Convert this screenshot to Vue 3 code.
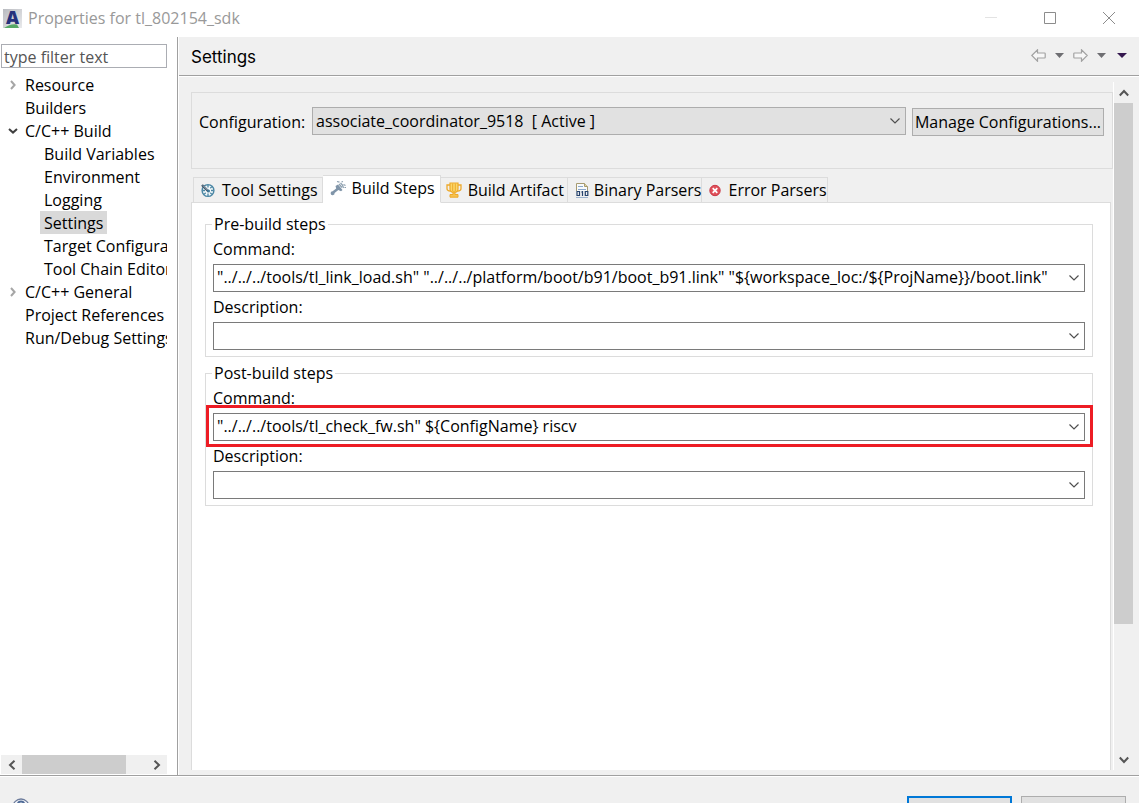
<script setup>
import { ref } from 'vue'

const filter = ref('')
const configuration = ref('associate')
const activeTab = ref('steps')

const tree = [
  { label: 'Resource', level: 1, state: 'closed' },
  { label: 'Builders', level: 1 },
  { label: 'C/C++ Build', level: 1, state: 'open' },
  { label: 'Build Variables', level: 2 },
  { label: 'Environment', level: 2 },
  { label: 'Logging', level: 2 },
  { label: 'Settings', level: 2, selected: true },
  { label: 'Target Configuration', level: 2 },
  { label: 'Tool Chain Editor', level: 2 },
  { label: 'C/C++ General', level: 1, state: 'closed' },
  { label: 'Project References', level: 1 },
  { label: 'Run/Debug Settings', level: 1 }
]

const tabs = [
  { id: 'tool', label: 'Tool Settings' },
  { id: 'steps', label: 'Build Steps' },
  { id: 'artifact', label: 'Build Artifact' },
  { id: 'binary', label: 'Binary Parsers' },
  { id: 'error', label: 'Error Parsers' }
]

const groups = ref([
  {
    id: 'pre',
    title: 'Pre-build steps',
    fields: [
      {
        id: 'command',
        label: 'Command:',
        value: '"../../../tools/tl_link_load.sh" "../../../platform/boot/b91/boot_b91.link" "${workspace_loc:/${ProjName}}/boot.link"'
      },
      { id: 'description', label: 'Description:', value: '' }
    ]
  },
  {
    id: 'post',
    title: 'Post-build steps',
    fields: [
      { id: 'command', label: 'Command:', value: '"../../../tools/tl_check_fw.sh" ${ConfigName} riscv', marked: true },
      { id: 'description', label: 'Description:', value: '' }
    ]
  }
])
</script>

<template>
  <div class="window">
    <header class="titlebar">
      <svg class="logo" width="19" height="19" viewBox="0 0 19 19" aria-hidden="true">
        <defs>
          <linearGradient id="logo-bg" x1="0" y1="0" x2="1" y2="1">
            <stop offset="0" stop-color="#b9bbc0" />
            <stop offset="1" stop-color="#e9eaec" />
          </linearGradient>
        </defs>
        <rect width="19" height="19" fill="url(#logo-bg)" />
        <path d="M1 19Q8 14 14 15.500L16 19Z" fill="#55a765" />
        <text class="logo-letter" x="9.5" y="15" text-anchor="middle">A</text>
      </svg>
      <h1 class="title">Properties for tl_802154_sdk</h1>
      <div class="controls">
        <button type="button" aria-label="Minimize" class="faint">
          <svg width="12" height="12" viewBox="0 0 12 12"><path d="M0 5.5H12" /></svg>
        </button>
        <button type="button" aria-label="Maximize">
          <svg width="12" height="12" viewBox="0 0 12 12"><path d="M.5.5H11.5V11.5H.5Z" /></svg>
        </button>
        <button type="button" aria-label="Close">
          <svg width="12" height="12" viewBox="0 0 12 12"><path d="M0 0L12 12M12 0L0 12" /></svg>
        </button>
      </div>
    </header>

    <div class="main">
      <nav class="sidebar">
        <input v-model="filter" class="filter" type="text" aria-label="Filter" placeholder="type filter text" />
        <ul class="tree">
          <li v-for="item in tree" :key="item.label" :class="'level-' + item.level">
            <span class="twist">
              <svg v-if="item.state === 'closed'" class="closed" width="6" height="10" viewBox="0 0 6 10"><path d="M1 1L4.6 5L1 9" /></svg>
              <svg v-if="item.state === 'open'" class="open" width="10" height="6" viewBox="0 0 10 6"><path d="M1 1L5 4.6L9 1" /></svg>
            </span>
            <a href="#" :class="{ selected: item.selected }">{{ item.label }}</a>
          </li>
        </ul>
        <div class="hscroll">
          <button type="button" aria-label="Scroll left">
            <svg width="8" height="10" viewBox="0 0 8 10"><path d="M6.5 .8L2 5L6.5 9.2" /></svg>
          </button>
          <div class="htrack"><div class="hthumb"></div></div>
          <button type="button" aria-label="Scroll right">
            <svg width="8" height="10" viewBox="0 0 8 10"><path d="M1.5 .8L6 5L1.5 9.2" /></svg>
          </button>
        </div>
      </nav>

      <section class="page">
        <div class="page-head">
          <h2>Settings</h2>
          <div class="history">
            <button type="button" aria-label="Back">
              <svg width="15" height="13" viewBox="0 0 15 13"><path class="arrow" d="M.8 6.5L6.5 .8V4H13.5Q14.2 4 14.2 4.7V8.3Q14.2 9 13.5 9H6.5V12.2Z" /></svg>
            </button>
            <button type="button" aria-label="Back history">
              <svg width="9" height="5" viewBox="0 0 9 5"><path class="caret" d="M0 0H9L4.5 5Z" /></svg>
            </button>
            <button type="button" aria-label="Forward">
              <svg width="15" height="13" viewBox="0 0 15 13"><path class="arrow" d="M14.2 6.5L8.5 .8V4H1.5Q.8 4 .8 4.7V8.3Q.8 9 1.5 9H8.5V12.2Z" /></svg>
            </button>
            <button type="button" aria-label="Forward history">
              <svg width="9" height="5" viewBox="0 0 9 5"><path class="caret" d="M0 0H9L4.5 5Z" /></svg>
            </button>
            <button type="button" aria-label="Menu" class="menu">
              <svg width="10" height="5" viewBox="0 0 10 5"><path class="caret dark" d="M0 0H10L5 5Z" /></svg>
            </button>
          </div>
        </div>

        <div class="page-body">
          <div class="content">
            <div class="config">
              <label for="configuration">Configuration:</label>
              <div class="config-select">
                <select id="configuration" v-model="configuration">
                  <option value="associate">associate_coordinator_9518&nbsp; [ Active ]</option>
                </select>
                <svg class="chevron" width="10" height="6" viewBox="0 0 10 6"><path d="M.5 .5L5 5L9.5 .5" /></svg>
              </div>
              <button type="button" class="manage">Manage Configurations...</button>
            </div>

            <div class="tabs" role="tablist">
              <button
                v-for="tab in tabs"
                :key="tab.id"
                type="button"
                role="tab"
                :aria-selected="tab.id === activeTab"
                :class="['tab', { active: tab.id === activeTab }]"
                @click="activeTab = tab.id"
              >
                <svg v-if="tab.id === 'tool'" width="16" height="16" viewBox="0 0 16 16">
                  <circle cx="8" cy="8.500" r="5.900" fill="#f3f8fa" stroke="#4a86a4" stroke-width="1.400" />
                  <path d="M8 3V5.500M8 11.500V14M2.500 8.500H5M11 8.500H13.500M11.900 4.600L10.300 6.200M4.100 12.400L5.700 10.800M11.900 12.400L10.300 10.800" stroke="#4a86a4" stroke-width="1.300" />
                  <path d="M2 3L8.500 9.500" stroke="#3b5266" stroke-width="2.400" />
                  <path d="M3 3.500L7.500 8" stroke="#dce8ee" stroke-width=".7" />
                  <circle cx="8.500" cy="9" r="1.500" fill="#3f7898" />
                </svg>
                <svg v-else-if="tab.id === 'steps'" width="16" height="16" viewBox="0 0 16 16">
                  <path d="M5.500 6L8 4.500L12.500 10L11 11.300L8.300 10L4.600 12.900A2 2 0 1 1 2.600 11.200L6.200 8.500Z" fill="#8095a9" />
                  <path d="M7 1.500L9.500 2.200M10.500 3L12.500 5L13.500 8M9 4L12 7.500M11.500 2L13 1.500M13.500 4.500L15.500 5.500M14.500 7.500H16" fill="none" stroke="#8b9eae" stroke-width="1.200" />
                </svg>
                <svg v-else-if="tab.id === 'artifact'" width="16" height="16" viewBox="0 0 16 16">
                  <path d="M4 3H1V6.500Q1 9 4.500 9M12 3H15V6.500Q15 9 11.500 9" fill="none" stroke="#eda92b" stroke-width="1.300" />
                  <path d="M4 1H12V7Q12 10.300 8 10.300Q4 10.300 4 7Z" fill="#fbd668" stroke="#eda92b" stroke-width="1.200" />
                  <path d="M6.700 1.500V9M9.300 1.500V9" stroke="#eda92b" />
                  <path d="M7 10H9V12.500H12V15.200H4V12.500H7Z" fill="#f6c350" stroke="#eda92b" />
                </svg>
                <svg v-else-if="tab.id === 'binary'" width="16" height="16" viewBox="0 0 16 16">
                  <path d="M3.500 9V1.500H11.500L14.500 4.500V9" fill="#f8fafc" stroke="#a69a70" />
                  <path d="M11.500 1.500V4.500H14.500" fill="#e4d6a0" stroke="#a69a70" />
                  <path d="M5 4.500H10M5 7.500H13" stroke="#8ca8c9" />
                  <path d="M3 15.500H15" stroke="#9db2cc" />
                  <path d="M4 9.500H6.500V13.500H4ZM9.500 9V14M8.300 10H9.500M12.300 9.500H14.800V13.500H12.300Z" fill="none" stroke="#27436d" stroke-width="1.200" />
                </svg>
                <svg v-else width="16" height="16" viewBox="0 0 16 16">
                  <circle cx="8" cy="8.500" r="5.200" fill="#e0505a" stroke="#c93a47" />
                  <path d="M5.700 6.200L10.300 10.800M10.300 6.200L5.700 10.800" stroke="#fff" stroke-width="1.700" />
                </svg>
                <span>{{ tab.label }}</span>
              </button>
            </div>

            <div class="folder" role="tabpanel">
              <fieldset v-for="group in groups" :key="group.id">
                <legend>{{ group.title }}</legend>
                <div v-for="field in group.fields" :key="field.id" class="field">
                  <label :for="group.id + '-' + field.id">{{ field.label }}</label>
                  <div :class="['combo', { marked: field.marked }]">
                    <input :id="group.id + '-' + field.id" v-model="field.value" type="text" />
                    <button type="button" :aria-label="'Show values for ' + field.label">
                      <svg class="chevron" width="10" height="6" viewBox="0 0 10 6"><path d="M.5 .5L5 5L9.5 .5" /></svg>
                    </button>
                  </div>
                </div>
              </fieldset>
            </div>
          </div>

          <div class="vscroll">
            <button type="button" aria-label="Scroll up">
              <svg width="10" height="8" viewBox="0 0 10 8"><path d="M.8 6.500L5 2L9.200 6.500" /></svg>
            </button>
            <div class="vtrack"><div class="vthumb"></div></div>
            <button type="button" aria-label="Scroll down">
              <svg width="10" height="8" viewBox="0 0 10 8"><path d="M.8 1.500L5 6L9.200 1.500" /></svg>
            </button>
          </div>
        </div>
      </section>
    </div>

    <footer class="footer">
      <button type="button" class="help" aria-label="Help">
        <svg width="18" height="18" viewBox="0 0 18 18">
          <circle cx="9" cy="9" r="8" fill="#f4f6fa" stroke="#6d7c9c" stroke-width="1.300" />
          <path d="M6 6Q6 3.500 9 3.500Q12 3.500 12 6Q12 8 9 9V11M9 13V14.500" fill="none" stroke="#4e6a96" stroke-width="2" />
        </svg>
      </button>
      <button type="button" class="action primary" aria-label="Apply and Close"></button>
      <button type="button" class="action" aria-label="Cancel"></button>
    </footer>
  </div>
</template>

<style>
body {
  margin: 0;
  background: #fff;
}
</style>

<style scoped>
.window,
.window * {
  box-sizing: border-box;
}

.window {
  display: flex;
  flex-direction: column;
  height: 100vh;
  overflow: hidden;
  padding-right: 4px;
  background: #fff;
  color: #000;
  font: 16px/23px "Open Sans", "Noto Sans", sans-serif;
}

button,
input,
select {
  margin: 0;
  padding: 0;
  border: 0;
  border-radius: 0;
  background: none;
  color: inherit;
  font: inherit;
}

svg {
  display: block;
  flex: none;
}

h1,
h2 {
  margin: 0;
  font-weight: 400;
}

.titlebar {
  display: flex;
  flex: none;
  align-items: center;
  height: 37px;
  padding: 0 1px 1px 3px;
}

.logo-letter {
  fill: #25317c;
  font: 800 18px "Open Sans", sans-serif;
}

.title {
  flex: 1;
  padding-left: 6px;
  color: #999;
  font-size: 16px;
}

.controls {
  display: flex;
  align-items: stretch;
  height: 100%;
}

.controls button {
  display: flex;
  align-items: center;
  justify-content: center;
  width: 59px;
}

.controls path {
  fill: none;
  stroke: #8c8c8c;
}

.controls .faint path {
  stroke: #e3e3e3;
}

.main {
  display: flex;
  flex: 1;
  min-height: 0;
}

.sidebar {
  display: flex;
  flex: none;
  flex-direction: column;
  width: 178px;
  padding: 7px 10px 1px 1px;
  border-right: 1px solid #a0a0a0;
}

.filter {
  flex: none;
  width: 100%;
  height: 24px;
  padding: 1px 2px 0;
  border: 1px solid #abadb3;
}

.filter::placeholder {
  color: #555;
  opacity: 1;
}

.tree {
  flex: 1;
  margin: 5px 0 0;
  padding: 0;
  overflow: hidden;
  list-style: none;
  white-space: nowrap;
}

.tree li {
  display: flex;
  height: 23px;
}

.tree .level-2 {
  padding-left: 19px;
}

.twist {
  display: flex;
  flex: none;
  align-items: center;
  justify-content: center;
  width: 20px;
  padding-left: 4px;
}

.twist path {
  fill: none;
  stroke: #a6a6a6;
  stroke-width: 2;
}

.twist .open path {
  stroke: #404040;
}

.tree a {
  padding: 0 4px;
  color: #000;
  line-height: 24px;
  text-decoration: none;
}

.tree a.selected {
  background: #d9d9d9;
}

.hscroll {
  display: flex;
  flex: none;
  height: 19px;
  background: #f0f0f0;
}

.hscroll button {
  display: flex;
  align-items: center;
  justify-content: center;
  width: 21px;
}

.hscroll path,
.vscroll path {
  fill: none;
  stroke: #555;
  stroke-width: 2;
}

.htrack {
  flex: 1;
}

.hthumb {
  width: 84%;
  height: 100%;
  background: #cdcdcd;
}

.page {
  display: flex;
  flex: 1;
  flex-direction: column;
  min-width: 0;
  margin-left: 1px;
  background: #f0f0f0;
}

.page-head {
  display: flex;
  flex: none;
  align-items: center;
  justify-content: space-between;
  height: 39px;
  padding: 0 12px;
  border-bottom: 1px solid #a0a0a0;
  box-shadow: 0 1px #fff;
}

.page-head h2 {
  padding-top: 2px;
  font: 400 17px/24px Inter, sans-serif;
}

.history {
  display: flex;
  gap: 9px;
  align-items: center;
  padding-bottom: 1px;
}

.history .menu {
  margin-left: 2px;
}

.arrow {
  fill: #f7f7f7;
  stroke: #a2a2a2;
  stroke-width: 1.2;
}

.caret {
  fill: #6e6e72;
}

.caret.dark {
  fill: #35184f;
}

.page-body {
  display: flex;
  flex: 1;
  min-height: 0;
  padding: 6px 6px 5px 12px;
}

.content {
  display: flex;
  flex: 1;
  flex-direction: column;
  min-width: 0;
  padding-top: 10px;
  border-right: 1px solid #fff;
}

.config {
  display: flex;
  flex: none;
  gap: 6px;
  align-items: flex-start;
  height: 77px;
  padding: 14px 8px 0 7px;
  border: 1px solid #dcdcdc;
}

.config label {
  width: 107px;
  padding-top: 4px;
}

.config-select {
  position: relative;
  flex: 1;
  min-width: 0;
}

.config-select select {
  display: block;
  width: 100%;
  height: 28px;
  padding: 0 24px 0 3px;
  border: 1px solid #adadad;
  background: #e1e1e1;
  appearance: none;
}

.chevron path {
  fill: none;
  stroke: #505050;
  stroke-width: 1.2;
}

.config-select .chevron {
  position: absolute;
  top: 11px;
  right: 6px;
  pointer-events: none;
}

.manage {
  min-width: 192px;
  height: 28px;
  margin-top: 1px;
  border: 1px solid #adadad;
  background: #e1e1e1;
  white-space: nowrap;
}

.tabs {
  display: flex;
  flex: none;
  align-items: flex-end;
  height: 28px;
  margin: 6px 0 -1px;
  padding-left: 2px;
}

.tab {
  display: flex;
  gap: 6px;
  align-items: center;
  height: 26px;
  padding: 0 3px 0 5px;
  border: solid #dcdcdc;
  border-width: 1px 1px 1px 0;
  white-space: nowrap;
}

.tab:first-child {
  padding: 0 4px 0 6px;
  border-left-width: 1px;
}

.tab:nth-child(n + 4) {
  gap: 5px;
  padding-right: 0;
}

.tab.active {
  z-index: 1;
  height: 28px;
  padding: 0 5px 2px 7px;
  border-bottom-color: #fff;
  background: #fff;
}

.folder {
  display: flex;
  flex: 1;
  flex-direction: column;
  gap: 5px;
  min-height: 0;
  margin-right: 2px;
  padding: 10px 17px 0 13px;
  overflow: hidden;
  border: solid #dcdcdc;
  border-width: 1px 1px 0;
  background: #fff;
}

fieldset {
  min-width: 0;
  margin: 0;
  padding: 3px 7px 6px;
  border: 1px solid #dcdcdc;
}

legend {
  margin-left: -1px;
  padding: 0 2px;
  line-height: 22px;
}

.field + .field {
  margin-top: 4px;
}

.field label {
  display: block;
  line-height: 22px;
}

.combo {
  position: relative;
  display: flex;
  height: 28px;
  margin-top: 4px;
  border: 1px solid #7a7a7a;
}

.combo input {
  flex: 1;
  min-width: 0;
  padding: 0 0 1px 3px;
}

.combo button {
  display: flex;
  align-items: center;
  justify-content: center;
  width: 20px;
}

.combo.marked::after {
  position: absolute;
  inset: -9px -9px -7px -8px;
  border: 3px solid #ed1c24;
  content: "";
  pointer-events: none;
}

.vscroll {
  display: flex;
  flex: none;
  flex-direction: column;
  width: 19px;
}

.vscroll button {
  display: flex;
  align-items: center;
  justify-content: center;
  height: 21px;
}

.vtrack {
  flex: 1;
}

.vthumb {
  height: 80.6%;
  background: #cdcdcd;
}

.footer {
  display: flex;
  flex: none;
  gap: 9px;
  align-items: flex-start;
  height: 28px;
  padding: 20px 13px 0 12px;
  overflow: hidden;
  border-top: 1px solid #a0a0a0;
  background: #f0f0f0;
  box-shadow: inset 0 1px #fff;
}

.help {
  margin: 2px auto 0 0;
}

.action {
  width: 105px;
  height: 28px;
  border: 1px solid #adadad;
  background: #e1e1e1;
}

.action.primary {
  border: 2px solid #0078d7;
}
</style>
